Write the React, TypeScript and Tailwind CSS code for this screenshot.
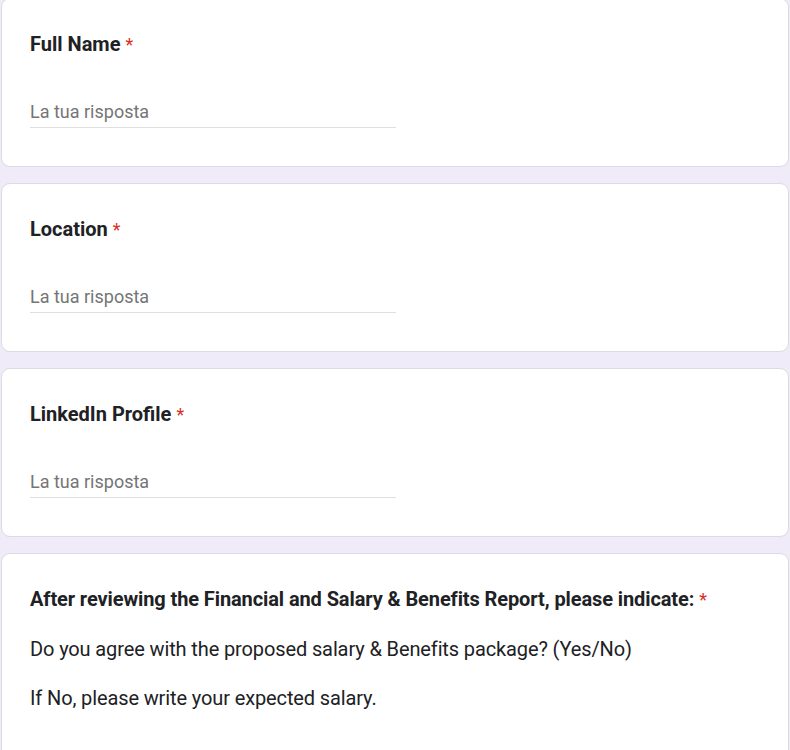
import React from 'react';

const Star = () => <span className="text-[#d93025] ml-[5px] font-normal text-[18px]">*</span>;

const ShortAnswer = ({ label }: { label: string }) => (
  <div className="bg-white border border-[#dadce0] rounded-[9px] h-[169px] pl-[28px] pt-[33px]">
    <div className="text-[20px] leading-[24px] font-bold text-[#202124]">
      {label}
      <Star />
    </div>
    <div className="mt-[43px] w-[366px] border-b border-[#e0e0e0] pb-[2px]">
      <span className="text-[18px] leading-[24px] text-[#757575]">La tua risposta</span>
    </div>
  </div>
);

const App = () => {
  return (
    <div
      className="min-h-screen bg-[#f0ebf8] overflow-hidden px-[1px]"
      style={{ fontFamily: 'Roboto, "Noto Sans", sans-serif' }}
    >
      <div className="flex flex-col gap-[16px] -mt-[2px]">
        <ShortAnswer label="Full Name" />
        <ShortAnswer label="Location" />
        <ShortAnswer label="LinkedIn Profile" />
        <div className="bg-white border border-[#dadce0] rounded-[9px] h-[220px] pl-[28px] pt-[33px] text-[#202124]">
          <div className="text-[20px] leading-[24px] font-bold tracking-[-0.1px]">
            After reviewing the Financial and Salary &amp; Benefits Report, please indicate:
            <Star />
          </div>
          <p className="mt-[25px] text-[20px] leading-[24px] tracking-[-0.12px]">
            Do you agree with the proposed salary &amp; Benefits package? (Yes/No)
          </p>
          <p className="mt-[25px] text-[20px] leading-[24px] tracking-[-0.12px]">
            If No, please write your expected salary.
          </p>
        </div>
      </div>
    </div>
  );
};

export default App;
